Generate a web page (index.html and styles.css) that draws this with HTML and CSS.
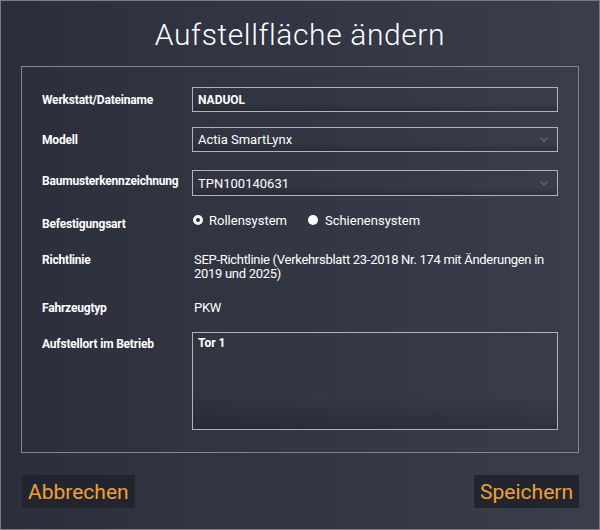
FILE: index.html
```html
<!DOCTYPE html>
<html lang="de">
<head>
    <meta charset="UTF-8">
    <meta name="viewport" content="width=device-width, initial-scale=1.0">
    <title>Aufstellfläche ändern</title>
    <link rel="stylesheet" href="styles.css">
</head>
<body>
    <div class="dialog">
        <h1>Aufstellfläche ändern</h1>
        <div class="panel">
            <div class="row">
                <label class="label">Werkstatt/Dateiname</label>
                <div class="field input bold">NADUOL</div>
            </div>
            <div class="row row-2">
                <label class="label">Modell</label>
                <div class="field select">
                    <span>Actia SmartLynx</span>
                    <svg class="chevron" width="8" height="5" viewBox="0 0 8 5"><polyline points="0.5,0.5 4,4 7.5,0.5" fill="none" stroke="#666876" stroke-width="1.4"/></svg>
                </div>
            </div>
            <div class="row row-3">
                <label class="label">Baumusterkennzeichnung</label>
                <div class="field select">
                    <span>TPN100140631</span>
                    <svg class="chevron" width="8" height="5" viewBox="0 0 8 5"><polyline points="0.5,0.5 4,4 7.5,0.5" fill="none" stroke="#666876" stroke-width="1.4"/></svg>
                </div>
            </div>
            <div class="row row-radio">
                <label class="label">Befestigungsart</label>
                <div class="radios">
                    <span class="radio checked"></span><span class="radio-text">Rollensystem</span>
                    <span class="radio"></span><span class="radio-text">Schienensystem</span>
                </div>
            </div>
            <div class="row row-text">
                <label class="label">Richtlinie</label>
                <div class="value">SEP-Richtlinie (Verkehrsblatt 23-2018 Nr. 174 mit Änderungen in 2019 und 2025)</div>
            </div>
            <div class="row row-type">
                <label class="label">Fahrzeugtyp</label>
                <div class="value">PKW</div>
            </div>
            <div class="row row-area">
                <label class="label">Aufstellort im Betrieb</label>
                <div class="field area bold">Tor 1</div>
            </div>
        </div>
        <div class="actions">
            <button class="btn">Abbrechen</button>
            <button class="btn">Speichern</button>
        </div>
    </div>
</body>
</html>
```

FILE: styles.css
```css
body {
    margin: 0;
    font-family: Roboto, 'Noto Sans', sans-serif;
    color: #fff;
}
.dialog {
    width: 600px;
    height: 530px;
    box-sizing: border-box;
    border: 1px solid #7c7c80;
    background: linear-gradient(to right, #2c2f3b, #3a3d4c);
}
h1 {
    margin: 14px 0 11px;
    height: 40px;
    line-height: 40px;
    text-align: center;
    font-size: 30px;
    font-weight: 300;
    letter-spacing: 0.6px;
}
.panel {
    margin: 0 20px;
    height: 387px;
    box-sizing: border-box;
    border: 1px solid #85868c;
    padding: 20px 20px 0 20px;
}
.row {
    display: flex;
    align-items: center;
}
.label {
    width: 150px;
    flex: 0 0 150px;
    font-size: 12px;
    font-weight: 700;
    letter-spacing: -0.2px;
}
.field {
    flex: 1;
    box-sizing: border-box;
    height: 25px;
    border: 1px solid #b2b3b8;
    padding: 0 5px;
    display: flex;
    align-items: center;
    font-size: 13px;
    background: linear-gradient(to bottom, rgba(0, 0, 0, 0) 65%, rgba(0, 0, 0, 0.18));
}
.bold {
    font-weight: 700;
    font-size: 12px;
}
.select {
    justify-content: space-between;
}
.chevron {
    margin-right: 4px;
}
.row-2 {
    margin-top: 15px;
}
.row-3 {
    margin-top: 18px;
}
.row-3 .field {
    height: 26px;
}
.row-3 .label {
    margin-bottom: 4px;
}
.row-radio {
    margin-top: 14px;
    height: 20px;
}
.row-radio .label {
    margin-top: 8px;
}
.radios {
    display: flex;
    align-items: center;
    font-size: 13px;
    padding-left: 1px;
}
.radio {
    width: 10px;
    height: 10px;
    border-radius: 50%;
    background: #fff;
    box-sizing: border-box;
    margin-right: 6px;
}
.radio.checked {
    border: 3px solid #f4f4f4;
    background: #2a2c37;
}
.radio-text {
    margin-right: 21px;
}
.radio-text:last-child {
    margin-left: 1px;
}
.row-text {
    margin-top: 23px;
    align-items: flex-start;
}
.value {
    flex: 1;
    padding-left: 2px;
    font-size: 13px;
    line-height: 14px;
    letter-spacing: -0.3px;
}
.row-text .label,
.row-type .label {
    line-height: 14px;
}
.row-type {
    margin-top: 20px;
}
.row-area {
    margin-top: 17px;
    align-items: flex-start;
}
.row-area .label {
    margin-top: 5px;
}
.area {
    height: 98px;
    align-items: flex-start;
    padding-top: 3px;
}
.actions {
    display: flex;
    justify-content: space-between;
    margin: 22px 20px 0 21px;
}
.btn {
    height: 33px;
    border: none;
    padding: 0 6px;
    background: #23252e;
    color: #f0a033;
    font-family: Roboto, 'Noto Sans', sans-serif;
    font-size: 21px;
}
```
